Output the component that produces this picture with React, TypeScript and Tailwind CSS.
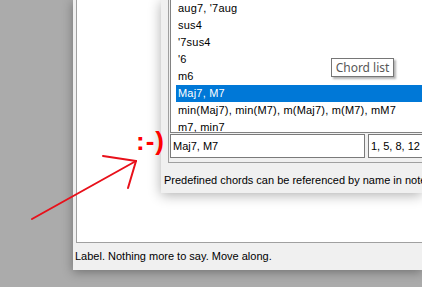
const chords = [
  "aug7, '7aug",
  'sus4',
  "'7sus4",
  "'6",
  'm6',
  'Maj7, M7',
  'min(Maj7), min(M7), m(Maj7), m(M7), mM7',
  'm7, min7',
];

export default function App() {
  return (
    <div className="relative h-[287px] w-[422px] overflow-hidden bg-[#ababab] font-['Liberation_Sans',Arial,sans-serif] text-[11px] text-black">
      {/* Main window */}
      <div className="h-[270px] pl-[73px]">
        <div className="flex h-full flex-col bg-[#f0f0f0] pl-[3px] shadow-[0_2px_10px_rgba(0,0,0,0.35)]">
          <div className="flex-1 border-b border-l border-[#a0a0a0] bg-white" />
          <div className="flex h-[27px] items-center leading-[13px]">
            <span className="-ml-[1px]">Label. Nothing more to say. Move along.</span>
          </div>
        </div>
      </div>

      {/* Chord dialog */}
      <div className="absolute left-[161px] right-0 top-0 h-[193px] bg-[#f0f0f0] shadow-[0_2px_12px_rgba(0,0,0,0.32)]">
        <div className="ml-[7px] border-b border-l border-[#a0a0a0] pb-[4px] pl-px">
          <div className="h-[133px] overflow-hidden border-b border-l border-[#828282] bg-white pl-[5px]">
            {chords.map((c, i) => (
              <div
                key={c}
                className={`flex h-[17px] items-center whitespace-nowrap pl-[2px] tracking-[0.2px] ${
                  i === 5 ? 'bg-[#0078d7] text-white' : ''
                }`}
              >
                {c}
              </div>
            ))}
          </div>
          <div className="mt-px flex gap-[3px]">
            <div className="flex h-[24px] w-[195px] items-center border border-[#7a7a7a] bg-white pl-[2px]">
              Maj7, M7
            </div>
            <div className="flex h-[24px] flex-1 items-center whitespace-nowrap border border-r-0 border-[#7a7a7a] bg-white pl-[2px]">
              1, 5, 8, 12
            </div>
          </div>
        </div>
        <div className="overflow-hidden whitespace-nowrap pl-[3px] pt-[11px] leading-[13px]">
          Predefined chords can be referenced by name in notes
        </div>
      </div>

      {/* Tooltip */}
      <div className="absolute left-[331px] top-[58px] flex h-[19px] w-[63px] items-center justify-center border border-[#767676] bg-white font-['Noto_Sans',sans-serif] text-[12px] text-[#575757] shadow-[2px_2px_2px_rgba(0,0,0,0.3)]">
        Chord list
      </div>

      {/* Smiley */}
      <div className="absolute left-[136px] top-[126px] font-['Liberation_Sans',Arial,sans-serif] text-[26px] font-bold leading-[30px] tracking-[1px] text-[#ff0000]">
        :-)
      </div>

      {/* Arrow */}
      <svg className="pointer-events-none absolute left-0 top-0" width="422" height="287">
        <g stroke="#e8101a" strokeWidth="2" fill="none" strokeLinecap="round">
          <line x1="32" y1="219" x2="136" y2="161" />
          <line x1="103" y1="156" x2="136" y2="161" />
          <line x1="128" y1="188" x2="136" y2="161" />
        </g>
      </svg>
    </div>
  );
}
